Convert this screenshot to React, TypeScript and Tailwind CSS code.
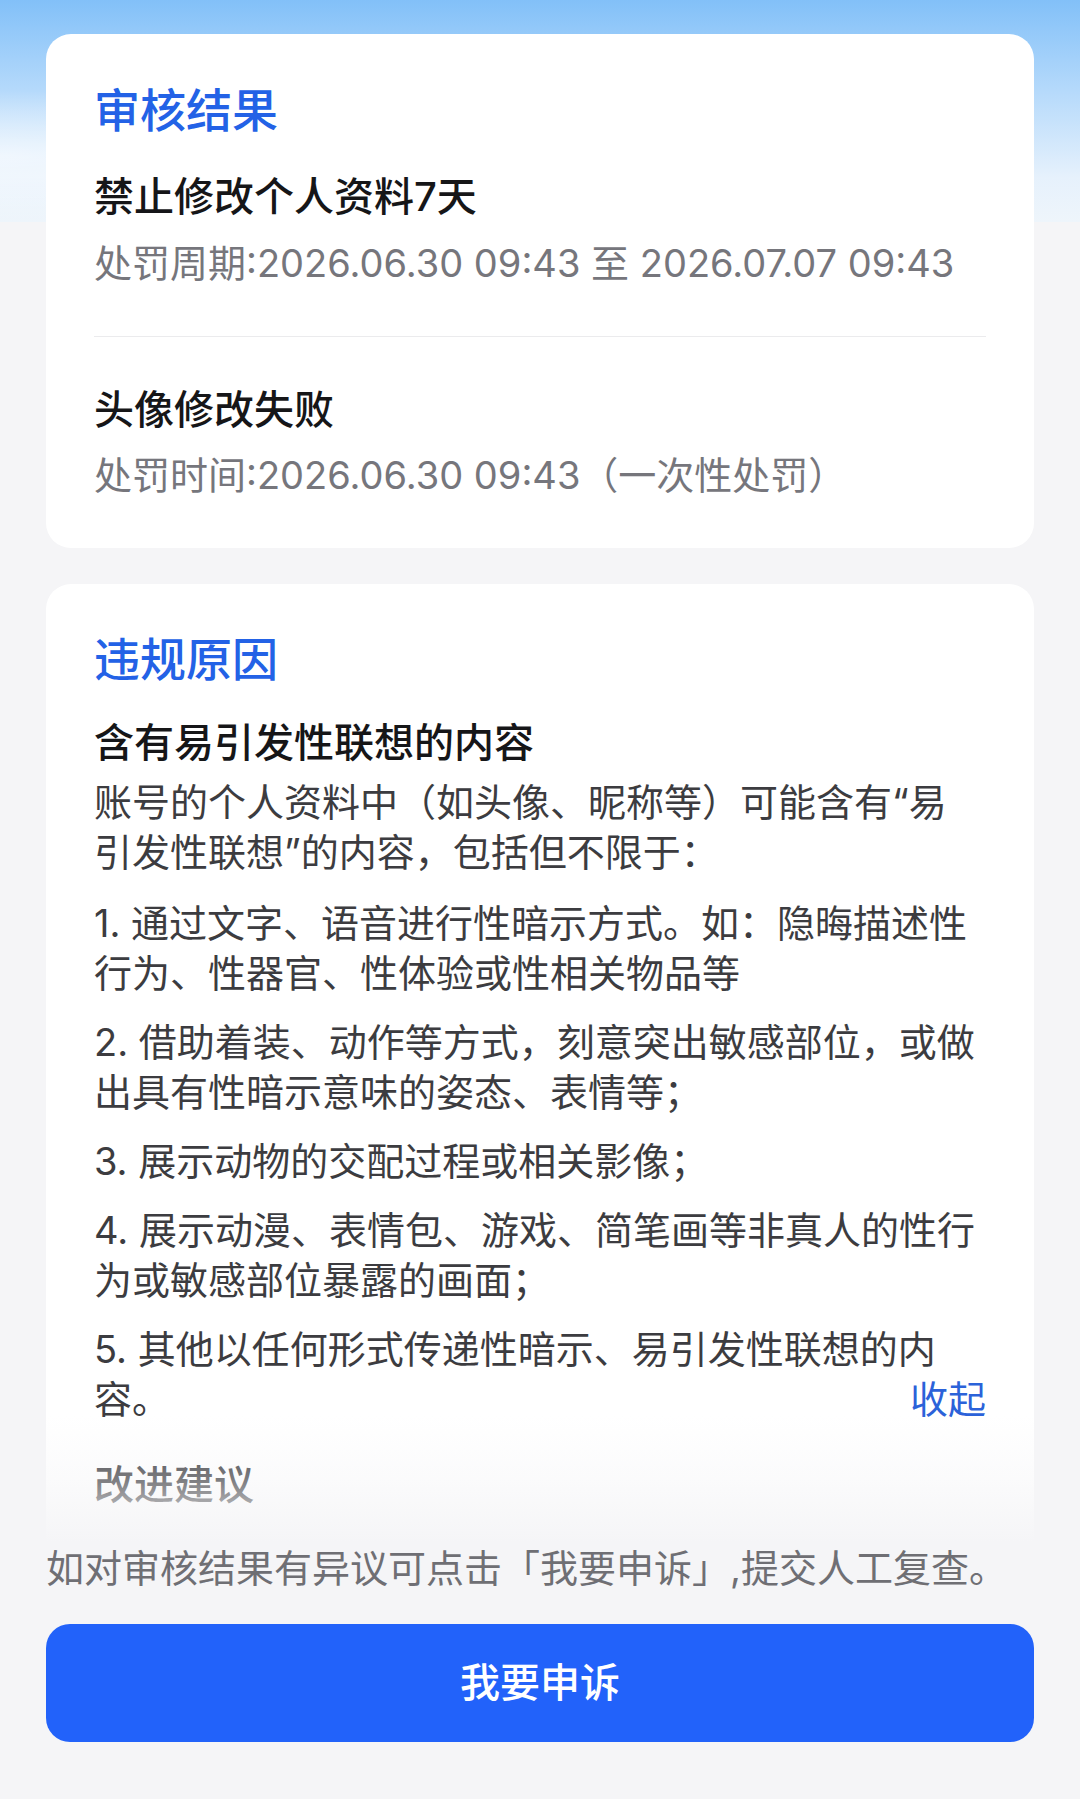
import React from "react";

const items = [
  "1. 通过文字、语音进行性暗示方式。如：隐晦描述性行为、性器官、性体验或性相关物品等",
  "2. 借助着装、动作等方式，刻意突出敏感部位，或做出具有性暗示意味的姿态、表情等；",
  "3. 展示动物的交配过程或相关影像；",
  "4. 展示动漫、表情包、游戏、简笔画等非真人的性行为或敏感部位暴露的画面；",
];

export default function App() {
  return (
    <div
      className="relative min-h-[1799px] bg-[#f5f5f7] text-[#161618]"
      style={{ fontFamily: '"Inter", "Noto Sans CJK SC", sans-serif' }}
    >
      {/* 顶部渐变背景 */}
      <div className="absolute inset-x-0 top-0 h-[222px] bg-[linear-gradient(180deg,#82c0f8_0%,#b4d9fb_40%,#e6f1fc_80%,#eef5fb_100%)]" />
      <div className="absolute left-0 top-[90px] h-[132px] w-[420px] bg-[radial-gradient(ellipse_at_left,rgba(255,255,255,0.6),rgba(255,255,255,0)_70%)]" />

      <div className="relative px-[46px] pt-[34px]">
        {/* 审核结果 */}
        <section className="rounded-[25px] bg-white px-[48px] pb-[48px] pt-[48px]">
          <h2 className="text-[46px] font-medium leading-[56px] text-[#2362e6]">审核结果</h2>
          <p className="mt-[33px] text-[40px] font-medium leading-[52px]">禁止修改个人资料7天</p>
          <p className="mt-[15px] text-[38px] leading-[50px] text-[#76767c]">
            处罚周期:2026.06.30 09:43 至 2026.07.07 09:43
          </p>
          <div className="mt-[48px] h-px bg-[#ebebed]" />
          <p className="mt-[47px] text-[40px] font-medium leading-[52px]">头像修改失败</p>
          <p className="mt-[14px] text-[38px] leading-[50px] text-[#76767c]">
            处罚时间:2026.06.30 09:43（一次性处罚）
          </p>
        </section>

        {/* 违规原因 */}
        <div className="relative mt-[36px] h-[959px] overflow-hidden">
          <section className="h-[1100px] rounded-[25px] bg-white px-[48px] pt-[47px]">
            <h2 className="text-[46px] font-medium leading-[56px] text-[#2362e6]">违规原因</h2>
            <p className="mt-[30px] text-[40px] font-medium leading-[52px]">含有易引发性联想的内容</p>
            <p className="mt-[8px] pr-[8px] text-[38px] leading-[50px] text-[#3c3c40]">
              账号的个人资料中（如头像、昵称等）可能含有“易引发性联想”的内容，包括但不限于：
            </p>
            <div className="mt-[21px] flex flex-col gap-[19px] text-[38px] leading-[50px] text-[#3c3c40]">
              {items.map((t) => (
                <p key={t}>{t}</p>
              ))}
              <div>
                <p>5. 其他以任何形式传递性暗示、易引发性联想的内</p>
                <div className="flex items-center justify-between">
                  <span>容。</span>
                  <button className="text-[#2b62d9]">收起</button>
                </div>
              </div>
            </div>
            <p className="mt-[35px] text-[40px] font-medium leading-[52px] text-[#2a2a2e]">改进建议</p>
          </section>
          <div className="absolute inset-x-0 bottom-0 h-[128px] bg-[linear-gradient(180deg,rgba(245,245,247,0)_0%,rgba(245,245,247,0.4)_50%,#f5f5f7_100%)]" />
        </div>

        <p className="text-[38px] leading-[50px] text-[#6f6f74]">
          如对审核结果有异议可点击「我要申诉」,提交人工复查。
        </p>

        <button className="mt-[31px] flex h-[118px] w-full items-center justify-center rounded-[24px] bg-[#2262fa] text-[40px] font-medium text-white">
          我要申诉
        </button>
      </div>
    </div>
  );
}
